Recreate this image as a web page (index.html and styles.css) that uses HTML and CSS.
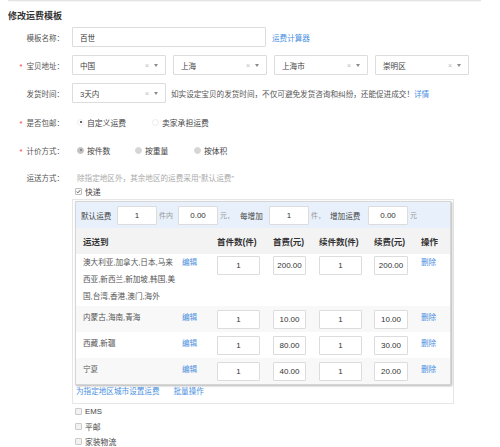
FILE: index.html
```html
<!DOCTYPE html>
<html lang="zh-CN">
<head>
<meta charset="utf-8">
<title>修改运费模板</title>
<link rel="stylesheet" href="styles.css">
</head>
<body>
<div class="topline"></div>
<h1 class="title">修改运费模板</h1>
<div class="form">
  <div class="row">
    <label class="lbl">模板名称：</label>
    <div class="ctl">
      <input class="input name" type="text" value="百世">
      <a class="link calc" href="#">运费计算器</a>
    </div>
  </div>
  <div class="row">
    <label class="lbl"><span class="req">*</span>宝贝地址：</label>
    <div class="ctl gap7">
      <div class="select"><span class="val">中国</span><span class="x">×</span><span class="caret"></span></div>
      <div class="select"><span class="val">上海</span><span class="x">×</span><span class="caret"></span></div>
      <div class="select"><span class="val">上海市</span><span class="x">×</span><span class="caret"></span></div>
      <div class="select"><span class="val">崇明区</span><span class="x">×</span><span class="caret"></span></div>
    </div>
  </div>
  <div class="row">
    <label class="lbl">发货时间：</label>
    <div class="ctl">
      <div class="select"><span class="val">3天内</span><span class="x">×</span><span class="caret"></span></div>
      <span class="tip">如实设定宝贝的发货时间，不仅可避免发货咨询和纠纷，还能促进成交！</span><a class="link" href="#">详情</a>
    </div>
  </div>
  <div class="row r-free">
    <label class="lbl"><span class="req">*</span>是否包邮：</label>
    <div class="ctl">
      <span class="opt w75"><span class="radio on"></span>自定义运费</span>
      <span class="opt"><span class="radio"></span>卖家承担运费</span>
    </div>
  </div>
  <div class="row r-price">
    <label class="lbl"><span class="req">*</span>计价方式：</label>
    <div class="ctl">
      <span class="opt w58"><span class="radio gray on"></span>按件数</span>
      <span class="opt w59"><span class="radio gray"></span>按重量</span>
      <span class="opt"><span class="radio gray"></span>按体积</span>
    </div>
  </div>
  <div class="row r-ship">
    <label class="lbl lh12">运送方式：</label>
    <div class="ship">
      <div class="hint">除指定地区外，其余地区的运费采用“默认运费”</div>
      <div class="cbline first"><span class="cb checked"><svg viewBox="0 0 8 8" width="7" height="7"><path d="M1.3 4.2 L3.1 6 L6.8 1.8" fill="none" stroke="#333" stroke-width="1.3"/></svg></span>快递</div>
      <div class="box">
        <div class="tbl">
          <div class="defrow">
            <span class="t w36 dark">默认运费</span>
            <input class="input tin w40" type="text" value="1">
            <span class="t w21 pl2 light">件内</span>
            <input class="input tin w40" type="text" value="0.00">
            <span class="t w22 pl2 light">元，</span>
            <span class="t w29 dark">每增加</span>
            <input class="input tin w40" type="text" value="1">
            <span class="t w21 pl2 light">件，</span>
            <span class="t w38 dark">增加运费</span>
            <input class="input tin w40" type="text" value="0.00">
            <span class="t pl2 light">元</span>
          </div>
          <div class="grow head">
            <span>运送到</span><span></span><span>首件数(件)</span><span>首费(元)</span><span>续件数(件)</span><span>续费(元)</span><span>操作</span>
          </div>
          <div class="grow body first">
            <span class="area">澳大利亚,加拿大,日本,马来西亚,新西兰,新加坡,韩国,美国,台湾,香港,澳门,海外</span>
            <a class="link" href="#">编辑</a>
            <span><input class="input tin w43" type="text" value="1"></span>
            <span><input class="input tin w33" type="text" value="200.00"></span>
            <span><input class="input tin w43" type="text" value="1"></span>
            <span><input class="input tin w34" type="text" value="200.00"></span>
            <a class="link" href="#">删除</a>
          </div>
          <div class="grow body alt">
            <span class="area">内蒙古,海南,青海</span>
            <a class="link" href="#">编辑</a>
            <span><input class="input tin w43" type="text" value="1"></span>
            <span><input class="input tin w33" type="text" value="10.00"></span>
            <span><input class="input tin w43" type="text" value="1"></span>
            <span><input class="input tin w34" type="text" value="10.00"></span>
            <a class="link" href="#">删除</a>
          </div>
          <div class="grow body">
            <span class="area">西藏,新疆</span>
            <a class="link" href="#">编辑</a>
            <span><input class="input tin w43" type="text" value="1"></span>
            <span><input class="input tin w33" type="text" value="80.00"></span>
            <span><input class="input tin w43" type="text" value="1"></span>
            <span><input class="input tin w34" type="text" value="30.00"></span>
            <a class="link" href="#">删除</a>
          </div>
          <div class="grow body alt">
            <span class="area">宁夏</span>
            <a class="link" href="#">编辑</a>
            <span><input class="input tin w43" type="text" value="1"></span>
            <span><input class="input tin w33" type="text" value="40.00"></span>
            <span><input class="input tin w43" type="text" value="1"></span>
            <span><input class="input tin w34" type="text" value="20.00"></span>
            <a class="link" href="#">删除</a>
          </div>
        </div>
        <div class="links"><a class="link" href="#">为指定地区城市设置运费</a><a class="link batch" href="#">批量操作</a></div>
      </div>
      <div class="cbline"><span class="cb"></span>EMS</div>
      <div class="cbline"><span class="cb"></span>平邮</div>
      <div class="cbline"><span class="cb"></span>家装物流</div>
    </div>
  </div>
</div>
</body>
</html>
```

FILE: styles.css
```css
* { box-sizing: border-box; }
body {
  margin: 0;
  font-family: "Liberation Sans", "Noto Sans CJK SC", sans-serif;
  font-size: 7.6px;
  color: #555;
  background: #fff;
}
.topline {
  height: 1px;
  width: 473px;
  margin-left: 8px;
  background: #e4e4e4;
  box-shadow: 0 1px 1px rgba(0,0,0,0.04);
}
.title {
  margin: 9px 0 0 8px;
  font-size: 9px;
  line-height: 13px;
  font-weight: bold;
  color: #333;
}
.form {
  display: flex;
  flex-direction: column;
  gap: 8px;
  margin-top: 4px;
}
.row {
  display: flex;
  align-items: center;
  min-height: 20px;
}
.r-free { margin-top: 1px; }
.r-ship { margin-top: 5px; align-items: flex-start; }
.lbl {
  width: 64px;
  flex: none;
  text-align: right;
  margin-right: 8px;
  color: #555;
  font-size: 7.5px;
}
.lh12 { line-height: 12px; }
.req { color: #f33; margin-right: 4px; }
.ctl { display: flex; align-items: center; }
.gap7 { gap: 7px; }
.input {
  height: 20px;
  border: 1px solid #dcdcdc;
  border-radius: 1px;
  padding: 0 7px;
  font-family: inherit;
  font-size: 7.6px;
  color: #333;
  background: #fff;
  outline: none;
}
.name { width: 194px; }
.link { color: #4a8fe0; text-decoration: none; }
.calc { margin-left: 6px; }
.select {
  width: 94px;
  height: 20px;
  border: 1px solid #dcdcdc;
  border-radius: 1px;
  display: flex;
  align-items: center;
  padding-left: 7px;
  color: #444;
}
.select .val { flex: 1; }
.select .x { color: #bbb; font-size: 7px; margin-right: 5px; }
.select .caret {
  width: 0;
  height: 0;
  border-left: 2.5px solid transparent;
  border-right: 2.5px solid transparent;
  border-top: 3px solid #8a8a8a;
  margin-right: 7px;
}
.tip { margin-left: 5px; color: #555; }
.opt { display: flex; align-items: center; color: #444; font-size: 7.8px; }
.w75 { width: 80px; padding-left: 5px; }
.w58 { width: 63px; padding-left: 5px; }
.w59 { width: 59px; }
.opt .radio + * { margin-left: 0; }
.radio {
  width: 7px;
  height: 7px;
  border-radius: 50%;
  border: 1px solid #ececec;
  background: #fff;
  margin-right: 3px;
  position: relative;
  flex: none;
}
.radio.on::after {
  content: "";
  position: absolute;
  left: 1.5px;
  top: 1.5px;
  width: 2px;
  height: 2px;
  border-radius: 50%;
  background: #333;
}
.radio.gray { background: #d6d6d6; border-color: #d6d6d6; }
.radio.gray.on { background: #c2c2c2; border-color: #c2c2c2; }
.radio.gray.on::after { background: #777; }

.ship { display: flex; flex-direction: column; }
.hint { line-height: 12px; padding-left: 5px; color: #aaa; }
.cbline {
  display: flex;
  align-items: center;
  height: 15px;
  padding-left: 3px;
  color: #444;
  font-size: 7.8px;
}
.cbline.first { height: 12px; }
.cb {
  width: 7px;
  height: 7px;
  border: 1px solid #cacaca;
  background: #f2f2f2;
  border-radius: 1px;
  margin-right: 3px;
  display: flex;
  align-items: center;
  justify-content: center;
  flex: none;
}
.cb svg { display: block; }
.cb.checked { background: #fafafa; border-color: #bdbdbd; }

.box {
  width: 382px;
  border: 1px solid #e6e6e6;
  padding: 1px 2px 0 2px;
  margin-top: 2px;
}
.tbl {
  border: 1px solid #d6d6d6;
  box-shadow: 1px 1px 2px rgba(0,0,0,0.3);
  background: #fff;
}
.defrow {
  height: 26px;
  background: #e8f1fb;
  display: flex;
  align-items: center;
  padding-left: 5px;
}
.t { display: inline-block; flex: none; }
.dark { color: #444; }
.light { color: #999; font-size: 7px; }
.pl2 { padding-left: 2px; }
.w36 { width: 36px; }
.w21 { width: 21px; }
.w22 { width: 22px; }
.w29 { width: 29px; }
.w38 { width: 38px; }
.tin { height: 19px; padding: 0; text-align: center; font-size: 8px; }
.w40 { width: 40px; }
.w43 { width: 43px; }
.w33 { width: 33px; }
.w34 { width: 34px; }

.grow {
  display: grid;
  grid-template-columns: 99px 35px 56px 46px 55px 47px 1fr;
  padding-left: 7px;
}
.head {
  height: 26px;
  align-items: center;
  background: #f3f3f3;
  font-size: 8.5px;
  font-weight: bold;
  color: #333;
}
.body {
  height: 26px;
  padding-top: 3px;
  align-items: start;
  line-height: 17px;
}
.body input { display: block; margin-top: 1px; }
.body.first { height: 52px; padding-top: 0; }
.body.first input { margin-top: 2px; }
.body.alt { background: #f8f8f8; }
.area { width: 92px; color: #555; }

.links { line-height: 12px; padding: 1px 0 5px 1px; }
.batch { margin-left: 14px; }
```
